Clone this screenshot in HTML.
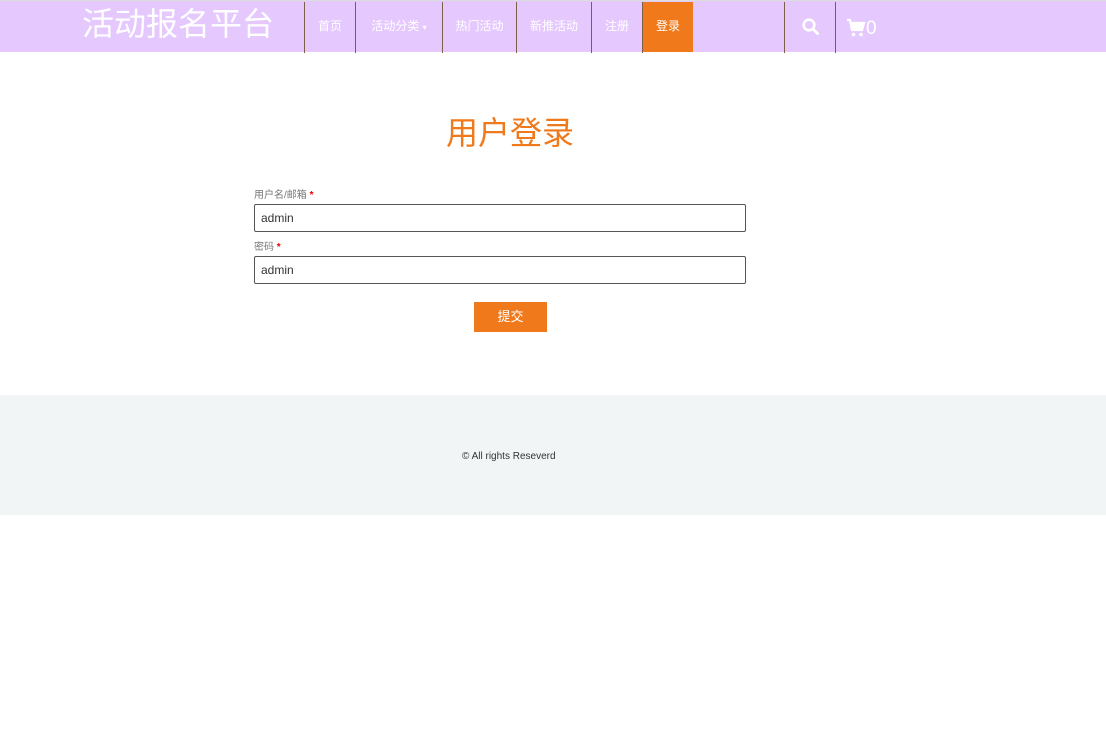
<!DOCTYPE html>
<html><head><meta charset="utf-8"><style>
*{margin:0;padding:0;box-sizing:border-box}
body{width:1106px;height:742px;background:#fff;font-family:"Liberation Sans","Noto Sans CJK SC",sans-serif;position:relative;overflow:hidden}
.nav{position:absolute;left:0;top:0;width:1106px;height:52px;background:#e5c8fe;border-top:1px solid #ddd}
.logo{position:absolute;left:82px;top:5px;font-size:32px;color:#fff;line-height:36px}
.sep{position:absolute;top:1px;width:1px;height:51px;background:#7d5f4a}
.item{position:absolute;top:1px;height:50px;line-height:48px;font-size:12px;color:#fff;text-align:center}
.active{background:#f0791c}
label{position:absolute;left:254px;font-size:10px;color:#777}
label b{color:#e00;font-size:10px}
.inp{position:absolute;left:254px;width:492px;height:28px;border:1px solid #555;border-radius:2px;font-size:12px;color:#333;padding-left:6px;line-height:26px}
.btn{position:absolute;left:474px;top:302px;width:73px;height:30px;background:#f0791c;color:#fff;font-size:13px;text-align:center;line-height:30px}
.foot{position:absolute;left:0;top:395px;width:1106px;height:120px;background:#f2f5f5}
</style></head><body>
<div class="nav">
<div class="logo">活动报名平台</div>
<div class="sep" style="left:304px"></div>
<div class="item" style="left:305px;width:50px">首页</div>
<div class="sep" style="left:355px"></div>
<div class="item" style="left:356px;width:86px">活动分类 <span style="font-size:8px">▾</span></div>
<div class="sep" style="left:442px"></div>
<div class="item" style="left:443px;width:73px">热门活动</div>
<div class="sep" style="left:516px"></div>
<div class="item" style="left:517px;width:74px">新推活动</div>
<div class="sep" style="left:591px"></div>
<div class="item" style="left:592px;width:50px">注册</div>
<div class="sep" style="left:642px"></div>
<div class="item active" style="left:643px;width:50px">登录</div>
<div class="sep" style="left:784px"></div>
<svg style="position:absolute;left:801px;top:16px" width="20" height="20" viewBox="0 0 20 20"><circle cx="8" cy="8" r="5.3" fill="none" stroke="#fff" stroke-width="2.6"/><line x1="12" y1="12" x2="16.5" y2="16.5" stroke="#fff" stroke-width="3" stroke-linecap="round"/></svg>
<div class="sep" style="left:835px"></div>
<svg style="position:absolute;left:846px;top:17px" width="20" height="20" viewBox="0 0 20 20"><path d="M1 2h3l2 10h10l2-7H5" fill="none" stroke="#fff" stroke-width="2.2"/><path d="M5 5h13l-2 7H6z" fill="#fff"/><circle cx="7.5" cy="16.5" r="1.8" fill="#fff"/><circle cx="15" cy="16.5" r="1.8" fill="#fff"/></svg>
<div style="position:absolute;left:866px;top:16px;font-size:19px;color:#fff;line-height:24px">0</div>
</div>
<div style="position:absolute;left:0;width:1020px;top:113px;text-align:center;font-size:32px;color:#f0791c;line-height:40px">用户登录</div>
<label style="top:186px">用户名/邮箱 <b>*</b></label>
<div class="inp" style="top:204px">admin</div>
<label style="top:238px">密码 <b>*</b></label>
<div class="inp" style="top:256px">admin</div>
<div class="btn">提交</div>
<div class="foot"><div style="position:absolute;left:462px;top:56px;font-size:10px;color:#333">© All rights Reseverd</div></div>
</body></html>
